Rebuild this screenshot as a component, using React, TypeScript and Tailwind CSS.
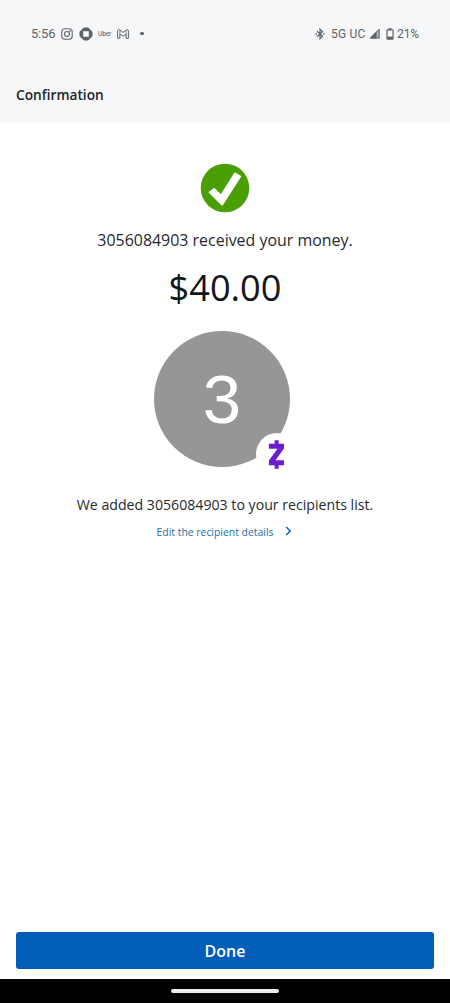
import { ReactNode } from "react";

function StatusBar() {
  return (
    <div className="flex h-[67px] items-center justify-between pl-[31px] pr-[31px] font-['Roboto',sans-serif] text-[12px] text-[#5f6367]">
      <div className="flex items-center">
        <span className="w-[30px] whitespace-nowrap text-[13px] tracking-[-0.2px]">5:56</span>
        {/* Instagram */}
        <svg className="h-[12px] w-[12px]" viewBox="0 0 12 12" fill="none" stroke="currentColor" strokeWidth="1.1">
          <rect x="0.8" y="0.8" width="10.4" height="10.4" rx="3" />
          <circle cx="6" cy="6" r="2.5" />
          <circle cx="8.9" cy="3.1" r="0.3" />
        </svg>
        {/* Chase */}
        <svg className="ml-[6px] h-[14px] w-[14px]" viewBox="0 0 14 14">
          <path d="M4.8 1h4.4L13 4.8v4.4L9.2 13H4.8L1 9.2V4.8z" fill="currentColor" stroke="currentColor" strokeLinejoin="round" />
          <rect x="4.2" y="4.2" width="5.6" height="5.6" fill="#f6f7f9" />
        </svg>
        <span className="ml-[5px] w-[19px] whitespace-nowrap font-['Inter',sans-serif] text-[6px] font-medium tracking-[-0.2px]">Uber</span>
        {/* Gmail */}
        <svg className="h-[10px] w-[12px]" viewBox="0 0 12 10" fill="none" stroke="currentColor" strokeWidth="1" strokeLinejoin="round">
          <path d="M0.6 1.7v7.6h2.3V4.9L6 7.3l3.1-2.4v4.4h2.3V1.7c0-1.1-1.2-1.5-2-.8L6 3.5 2.6.9c-.8-.7-2-.3-2 .8z" />
          <path d="M2.9 4.9V1.2M9.1 4.9V1.2" strokeWidth="0.7" />
        </svg>
        <span className="ml-[11px] h-[3.6px] w-[3.6px] rounded-full bg-[#5f6367]" />
      </div>
      <div className="flex items-center">
        <svg className="h-[12px] w-[10px]" viewBox="0 0 10 12" fill="none" stroke="currentColor" strokeWidth="1.2">
          <path d="M2 3.3l5.6 5L5 10.8V1.2l2.6 2.5L2 8.7" />
          <path d="M0.5 6h1.4M8.1 6h1.4" strokeWidth="1.3" />
        </svg>
        <span className="ml-[6px] w-[38px] whitespace-nowrap tracking-[0.2px]">5G UC</span>
        <svg className="h-[11px] w-[11px]" viewBox="0 0 11 11">
          <path d="M10.6 0.5v10H0.5z" fill="currentColor" fillOpacity="0.45" />
          <path d="M7.5 3.6v6.9h-7z" fill="currentColor" />
          <path d="M10.1 1.4v8.6H1.6z" fill="none" stroke="currentColor" />
        </svg>
        <svg className="ml-[6px] h-[12px] w-[8px]" viewBox="0 0 8 12">
          <rect x="2.5" y="0.2" width="3" height="1.8" fill="currentColor" />
          <rect x="1" y="1.9" width="6" height="9.2" rx="0.6" fill="none" stroke="currentColor" strokeWidth="1.2" />
          <rect x="1" y="8.6" width="6" height="2.4" fill="currentColor" />
        </svg>
        <span className="ml-[3px] w-[22px] whitespace-nowrap tracking-[-0.1px]">21%</span>
      </div>
    </div>
  );
}

function Line({ className, children }: { className: string; children: ReactNode }) {
  return <p className={`whitespace-nowrap ${className}`}>{children}</p>;
}

function Avatar() {
  return (
    <div className="relative mr-[6px] mt-[22px] flex h-[136px] w-[136px] items-center justify-center rounded-full bg-[#969696]">
      <span className="font-['Liberation_Sans',sans-serif] text-[69px] leading-none text-white">3</span>
      {/* Zelle badge */}
      <div className="absolute left-[102px] top-[102px] flex h-[42px] w-[42px] items-center justify-center rounded-full bg-white">
        <svg className="mr-px h-[29px] w-[17px]" viewBox="0 0 17 29" fill="#6c1cd3">
          <path d="M6.6 0.3h4v3.5H16v4.8L7.4 20.3H16v5h-5.4v3.4h-4v-3.4H.9v-4.8L9.5 8.8H.9v-5h5.7z" />
        </svg>
      </div>
    </div>
  );
}

export default function App() {
  return (
    <div className="flex h-[1003px] w-[450px] flex-col overflow-hidden bg-white font-['Open_Sans',sans-serif] text-[#26292e]">
      <header className="h-[123px] bg-[#f6f7f9]">
        <StatusBar />
        <h1 className="pl-4 pt-[18px] text-[13.7px] font-semibold leading-[20px] text-[#20242a]">Confirmation</h1>
      </header>

      <main className="flex flex-1 flex-col items-center pt-[40px]">
        <svg className="h-[50px] w-[50px]" viewBox="0 0 50 50">
          <circle cx="25" cy="25" r="24.3" fill="#4a9f05" />
          <path d="M9.3 29.2l4.9-3.5 6.8 6.6L34.9 10.2l5.6 3.2-18.4 28.6z" fill="#fff" stroke="#fff" strokeWidth="1.4" strokeLinejoin="round" />
        </svg>
        <Line className="mt-[16px] text-[15.95px] leading-[22px]">3056084903 received your money.</Line>
        <Line className="mt-[14px] text-[36.2px] leading-[44px] text-[#10161d]">$40.00</Line>
        <Avatar />
        <Line className="mt-[28px] text-[14.15px] leading-[20px]">We added 3056084903 to your recipients list.</Line>
        <a className="mt-[9px] mr-[1px] flex items-center text-[10.4px] leading-[16px] text-[#226fac]">
          Edit the recipient details
          <svg className="mb-[2px] ml-[12px] h-[10px] w-[7px]" viewBox="0 0 7 10" fill="none" stroke="#176bad" strokeWidth="1.6">
            <path d="M1.2 1l4 4-4 4" />
          </svg>
        </a>
      </main>

      <div className="px-4 pb-[10px]">
        <button className="block h-[37px] w-full rounded-[3px] bg-[#005eb8] text-[16px] font-semibold text-white">Done</button>
      </div>
      <footer className="flex h-[24px] justify-center bg-black pt-[10px]">
        <div className="h-[4px] w-[108px] rounded-full bg-[#ececec]" />
      </footer>
    </div>
  );
}
